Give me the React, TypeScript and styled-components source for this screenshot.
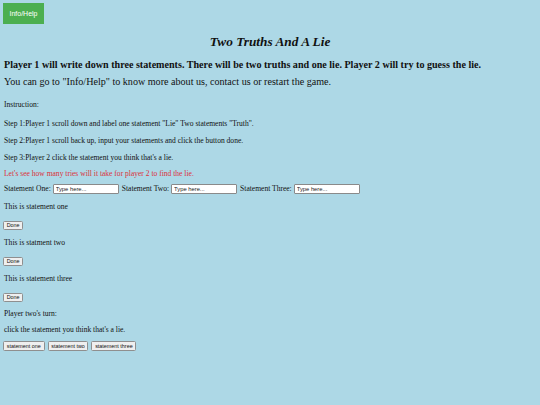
import React from "react";
import styled, { createGlobalStyle } from "styled-components";

const Global = createGlobalStyle`
  html, body { margin: 0; padding: 0; background: #add8e6; }
  body { font-family: "Liberation Serif", "Times New Roman", serif; color: #111; }
  #root { min-height: 100vh; }
`;

const Page = styled.div`
  display: flex;
  flex-direction: column;
  align-items: flex-start;
  padding: 3px 4px 20px 4px;
`;

const InfoButton = styled.button`
  width: 41px;
  height: 21px;
  margin-left: -1px;
  padding: 0;
  border: none;
  background: #4caf50;
  color: #fff;
  font-family: "Liberation Sans", Arial, sans-serif;
  font-size: 7px;
`;

const Title = styled.h1`
  align-self: stretch;
  margin: 9px 0 0;
  font-size: 13.3px;
  line-height: 18px;
  font-style: italic;
  font-weight: bold;
  text-align: center;
`;

const Lead = styled.h3`
  margin: 7.5px 0 0;
  font-size: 10.1px;
  line-height: 11px;
  font-weight: bold;
`;

const Sub = styled.div`
  margin-top: 6.5px;
  font-size: 10.1px;
  line-height: 12px;
`;

const Para = styled.p<{ $gap?: number; $red?: boolean }>`
  margin: ${(p) => p.$gap ?? 8}px 0 0;
  font-size: 7.55px;
  line-height: 9px;
  color: ${(p) => (p.$red ? "#dc3039" : "#111")};
`;

const InputRow = styled.div`
  display: flex;
  align-items: center;
  gap: 2px;
  margin-top: 6.5px;
  font-size: 7.55px;
  line-height: 10px;
`;

const Label = styled.label`
  white-space: nowrap;
`;

const TextInput = styled.input`
  box-sizing: border-box;
  width: 66px;
  height: 10px;
  margin-right: 1px;
  padding: 0 2px;
  border: 1px solid #8a8a8a;
  border-radius: 1px;
  background: #fff;
  font-family: "Liberation Sans", Arial, sans-serif;
  font-size: 5.8px;
  &::placeholder { color: #222; }
`;

const SmallButton = styled.button<{ $gap?: number }>`
  box-sizing: border-box;
  height: 9px;
  margin: ${(p) => p.$gap ?? 10}px 0 0 -1px;
  padding: 0 2.7px;
  border: 1px solid #8f8f8f;
  border-radius: 1.5px;
  background: #efefef;
  color: #111;
  font-family: "Liberation Sans", Arial, sans-serif;
  font-size: 5.4px;
  line-height: 7px;
`;

const ChoiceRow = styled.div`
  display: flex;
  gap: 3px;
  margin: 7px 0 0 -1px;
  & > button { margin: 0; height: 10px; }
`;

export default function App() {
  return (
    <>
      <Global />
      <Page>
        <InfoButton>Info/Help</InfoButton>
        <Title>Two Truths And A Lie</Title>
        <Lead>
          Player 1 will write down three statements. There will be two truths and one lie. Player 2 will try to guess the lie.
        </Lead>
        <Sub>You can go to "Info/Help" to know more about us, contact us or restart the game.</Sub>
        <Para $gap={11.5}>Instruction:</Para>
        <Para $gap={10}>Step 1:Player 1 scroll down and label one statement "Lie" Two statements "Truth".</Para>
        <Para>Step 2:Player 1 scroll back up, input your statements and click the button done.</Para>
        <Para>Step 3:Player 2 click the statement you think that's a lie.</Para>
        <Para $red $gap={7}>Let's see how many tries will it take for player 2 to find the lie.</Para>
        <InputRow>
          <Label>Statement One:</Label>
          <TextInput placeholder="Type here..." />
          <Label>Statement Two:</Label>
          <TextInput placeholder="Type here..." />
          <Label>Statement Three:</Label>
          <TextInput placeholder="Type here..." />
        </InputRow>
        <Para $gap={7.5}>This is statement one</Para>
        <SmallButton>Done</SmallButton>
        <Para $gap={8.5}>This is statment two</Para>
        <SmallButton>Done</SmallButton>
        <Para $gap={7.5}>This is statement three</Para>
        <SmallButton>Done</SmallButton>
        <Para $gap={7.5}>Player two's turn:</Para>
        <Para $gap={7}>click the statement you think that's a lie.</Para>
        <ChoiceRow>
          <SmallButton>statement one</SmallButton>
          <SmallButton>statement two</SmallButton>
          <SmallButton>statement three</SmallButton>
        </ChoiceRow>
      </Page>
    </>
  );
}
